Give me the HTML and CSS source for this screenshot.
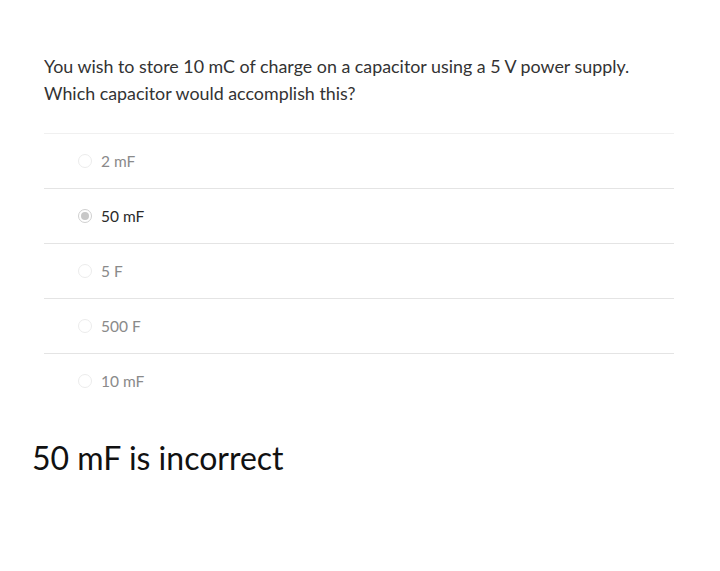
FILE: index.html
```html
<!DOCTYPE html>
<html>
<head>
<meta charset="utf-8">
<link rel="stylesheet" href="styles.css">
</head>
<body>
<div class="page">
  <div class="question">
    <p class="prompt">You wish to store 10 mC of charge on a capacitor using a 5 V power supply. Which capacitor would accomplish this?</p>
    <ul class="options">
      <li class="option"><span class="radio"></span><span class="label">2 mF</span></li>
      <li class="option selected"><span class="radio"></span><span class="label">50 mF</span></li>
      <li class="option"><span class="radio"></span><span class="label">5 F</span></li>
      <li class="option"><span class="radio"></span><span class="label">500 F</span></li>
      <li class="option"><span class="radio"></span><span class="label">10 mF</span></li>
    </ul>
  </div>
  <p class="result">50 mF is incorrect</p>
</div>
</body>
</html>
```
FILE: styles.css
```css
html, body {
  margin: 0;
  padding: 0;
  background: #fff;
}
body {
  font-family: Lato, "Open Sans", sans-serif;
  color: #333;
}
.page {
  padding: 0 46px 0 32px;
}
.question {
  padding: 53px 0 0 12px;
}
.prompt {
  margin: 0;
  font-size: 17.85px;
  line-height: 27px;
  color: #333;
  width: 620px;
}
.options {
  list-style: none;
  margin: 26px 0 0 0;
  padding: 0;
  border-top: 1px solid #f0f0f0;
}
.option {
  display: flex;
  align-items: center;
  height: 54px;
  border-bottom: 1px solid #e4e4e4;
  padding-left: 34px;
}
.option:last-child {
  border-bottom: none;
}
.radio {
  width: 14px;
  height: 14px;
  border-radius: 50%;
  border: 1px solid #ececec;
  box-sizing: border-box;
  margin-right: 9px;
  background: #fff;
  display: flex;
  align-items: center;
  justify-content: center;
}
.selected .radio {
  border-color: #d0d0d0;
}
.selected .radio::after {
  content: "";
  width: 8px;
  height: 8px;
  border-radius: 50%;
  background: #c8c8c8;
}
.label {
  font-size: 15.5px;
  color: #8a8a8a;
}
.selected .label {
  color: #2a2a2a;
}
.result {
  margin: 30px 0 0 0;
  font-size: 32px;
  color: #111;
  line-height: 40px;
}
```
